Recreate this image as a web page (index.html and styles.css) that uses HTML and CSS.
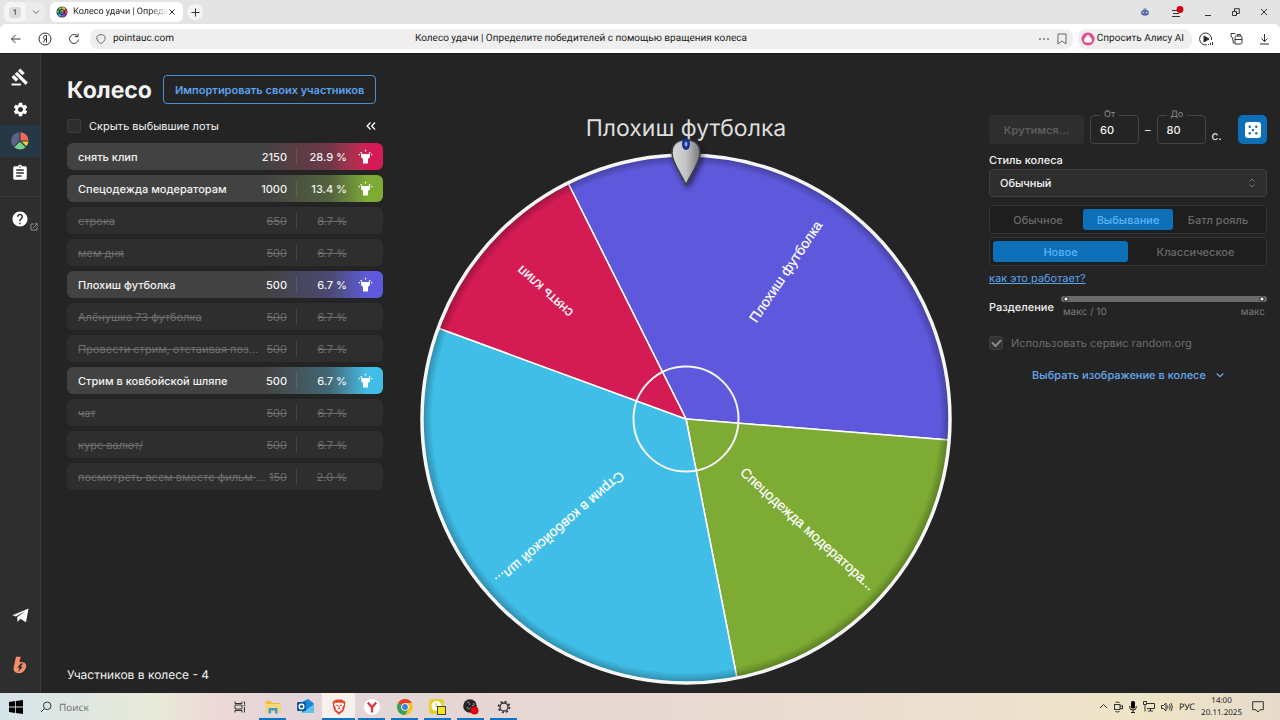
FILE: index.html
```html
<!DOCTYPE html>
<html lang="ru">
<head>
    <meta charset="UTF-8">
    <title>Колесо удачи | Определите победителей с помощью вращения колеса</title>
    <link rel="stylesheet" href="styles.css">
</head>
<body>
    <header class="browser">
        <div class="tabs">
            <div class="tab-group">
                <button class="tab-count" aria-label="Вкладки"><span>1</span></button>
                <button class="tab-list" aria-label="Список вкладок">
                    <svg width="8" height="8" viewBox="0 0 8 8" class="line soft"><path d="M1 2.500l3 3 3-3"/></svg>
                </button>
            </div>
            <div class="tab">
                <svg width="12" height="12" viewBox="0 0 12 12">
                    <circle cx="6" cy="6" r="5.500" fill="#222"/>
                    <path d="M6 6L6 1A5 5 0 0 1 10 3z" fill="#e8b93a"/>
                    <path d="M6 6L10.500 3.500A5 5 0 0 1 10.500 8.500z" fill="#d83b6b"/>
                    <path d="M6 6L10 9A5 5 0 0 1 6 11z" fill="#8a4fd0"/>
                    <path d="M6 6L5.500 11A5 5 0 0 1 1.500 8.500z" fill="#3aa6d8"/>
                    <path d="M6 6L1.200 7.500A5 5 0 0 1 1.700 3.500z" fill="#35b58a"/>
                    <path d="M6 6L2.200 2.800A5 5 0 0 1 5.500 1z" fill="#7fc043"/>
                    <circle cx="6" cy="6" r="2.600" fill="none" stroke="#222" stroke-width="0.800"/>
                </svg>
                <span class="tab-title">Колесо удачи | Опреде</span>
                <button class="icon-btn" aria-label="Закрыть вкладку">
                    <svg width="8" height="8" viewBox="0 0 8 8" class="line"><path d="M1.500 1.500l5 5M6.500 1.500l-5 5"/></svg>
                </button>
            </div>
            <button class="new-tab" aria-label="Новая вкладка">
                <svg width="9" height="9" viewBox="0 0 9 9" class="line"><path d="M4.500 0.500v8M0.500 4.500h8"/></svg>
            </button>
            <div class="window-buttons">
                <button class="icon-btn" aria-label="Профиль">
                    <svg width="10" height="10" viewBox="0 0 10 10"><path d="M3.500 1h3v2h-3z" fill="#9aa3c4"/><ellipse cx="5" cy="5.800" rx="4" ry="3" fill="#5b6cab"/><path d="M2.500 5.500h1.500M6 5.500h1.500" stroke="#dde"/></svg>
                </button>
                <button class="icon-btn" aria-label="Меню">
                    <svg width="14" height="12" viewBox="0 0 14 12"><path d="M2 4.500h6M3 7.500h6M2 10.500h8" stroke="#333"/><circle cx="10" cy="3.500" r="3.400" fill="#d4000f"/></svg>
                </button>
                <button class="icon-btn" aria-label="Свернуть">
                    <svg width="8" height="8" viewBox="0 0 8 8" class="line"><path d="M1 7.500h6"/></svg>
                </button>
                <button class="icon-btn" aria-label="Развернуть">
                    <svg width="8" height="8" viewBox="0 0 8 8" class="line"><path d="M0.500 3.500h4v4h-4zM2.500 3V0.700h4.800v4.800H5"/></svg>
                </button>
                <button class="icon-btn" aria-label="Закрыть">
                    <svg width="8" height="8" viewBox="0 0 8 8" class="line"><path d="M1 1l6 6M7 1l-6 6"/></svg>
                </button>
            </div>
        </div>
        <div class="toolbar">
            <div class="nav-buttons">
                <button class="icon-btn" aria-label="Назад">
                    <svg width="12" height="12" viewBox="0 0 12 12" class="line"><path d="M10.500 6h-9M5.500 2l-4 4 4 4"/></svg>
                </button>
                <button class="icon-btn" aria-label="Яндекс">
                    <svg width="14" height="14" viewBox="0 0 14 14" class="line"><circle cx="7" cy="7" r="6"/><path d="M8.500 10.500v-7H7.300c-2.500 0-2.500 3.700 0 3.700h1.200M7.200 7.200l-1.900 3.300"/></svg>
                </button>
                <button class="icon-btn" aria-label="Обновить">
                    <svg width="12" height="12" viewBox="0 0 12 12" class="line"><path d="M9.800 3.500A4.500 4.500 0 1 0 10.500 6.500M10 0.500v3.200H6.800"/></svg>
                </button>
            </div>
            <div class="address">
                <svg width="10" height="10" viewBox="0 0 10 10" class="line soft"><path d="M5 0.700C6.500 0.700 9.200 1.500 9.200 3.500c0 3-2 5-4.200 6-2.200-1-4.200-3-4.200-6C0.800 1.500 3.500 0.700 5 0.700z"/></svg>
                <span class="domain">pointauc.com</span>
                <span class="page-title">Колесо удачи | Определите победителей с помощью вращения колеса</span>
                <button class="icon-btn" aria-label="Ещё">
                    <svg width="12" height="4" viewBox="0 0 12 4" fill="#777"><circle cx="2" cy="2" r="1"/><circle cx="6" cy="2" r="1"/><circle cx="10" cy="2" r="1"/></svg>
                </button>
                <button class="icon-btn" aria-label="В закладки">
                    <svg width="10" height="12" viewBox="0 0 10 12" class="line soft"><path d="M1 1h8v10L5 8l-4 3z"/></svg>
                </button>
            </div>
            <button class="alice">
                <svg width="14" height="14" viewBox="0 0 14 14"><circle cx="7" cy="7" r="6.500" fill="#e8478b"/><path d="M7 2.800c1.200 0 4.200 4.800 4.200 6 0 1.300-2 2-4.200 2s-4.200-.7-4.200-2c0-1.200 3-6 4.200-6z" fill="#fff"/></svg>
                <span>Спросить Алису AI</span>
            </button>
            <div class="tools">
                <button class="icon-btn" aria-label="Плеер">
                    <svg width="15" height="14" viewBox="0 0 15 14" class="line"><path d="M8 12.800A6 6 0 1 1 12.500 8"/><path d="M5 4l5 3-5 3z" fill="#222"/><path d="M9.500 13v-1M11.500 13v-2M13.500 13v-3"/></svg>
                </button>
                <button class="icon-btn" aria-label="Коллекции">
                    <svg width="13" height="13" viewBox="0 0 13 13" class="line"><path d="M3.500 11.500L2.500 6 1 4V1.500h4l1 1M5 12h5.500q1.500 0 1.500-1.500V5.500Q12 4 10.500 4H6.500Q5 4 5 5.500zM5 7.500h7M7.500 4V2.500h3V4"/></svg>
                </button>
                <button class="icon-btn" aria-label="Загрузки">
                    <svg width="11" height="12" viewBox="0 0 11 12" class="line"><path d="M5.500 1v7.500M2.500 5.500l3 3 3-3M1 11h9"/></svg>
                </button>
            </div>
        </div>
    </header>

    <div class="app">
        <nav class="sidebar">
            <a href="#" class="nav-item" aria-label="Аукцион">
                <svg width="18" height="18" viewBox="0 0 24 24"><path d="M1 21h12v2H1zM5.245 8.070l2.830-2.827 14.140 14.142-2.828 2.828zM12.317 1l5.657 5.656-2.830 2.830-5.654-5.660zM3.825 9.485l5.657 5.657-2.828 2.828-5.657-5.657z" stroke="#fff" stroke-width="0.500"/></svg>
            </a>
            <a href="#" class="nav-item" aria-label="Настройки">
                <svg width="17" height="17" viewBox="0 0 24 24"><path d="M19.140 12.940c.04-.3.060-.61.060-.94 0-.32-.02-.64-.07-.94l2.030-1.580c.18-.14.23-.41.12-.61l-1.920-3.320c-.12-.22-.37-.29-.59-.22l-2.390.96c-.5-.38-1.030-.7-1.620-.94l-.36-2.540c-.04-.24-.24-.41-.48-.41h-3.840c-.24 0-.43.17-.47.41l-.36 2.540c-.59.24-1.130.57-1.620.94l-2.390-.96c-.22-.08-.47 0-.59.22L2.740 8.870c-.12.21-.08.47.12.61l2.030 1.580c-.05.3-.09.63-.09.94s.02.64.07.94l-2.030 1.580c-.18.14-.23.41-.12.61l1.920 3.320c.12.22.37.29.59.22l2.390-.96c.5.38 1.030.7 1.620.94l.36 2.540c.05.24.24.41.48.41h3.840c.24 0 .44-.17.47-.41l.36-2.540c.59-.24 1.130-.56 1.620-.94l2.390.96c.22.08.47 0 .59-.22l1.920-3.320c.12-.22.07-.47-.12-.61zM12 15.600c-1.980 0-3.600-1.620-3.600-3.600s1.620-3.600 3.600-3.600 3.600 1.620 3.600 3.600-1.620 3.600-3.600 3.600"/></svg>
            </a>
            <a href="#" class="nav-item active" aria-label="Колесо">
                <svg width="18" height="18" viewBox="0 0 18 18">
                    <path d="M9.500 8.500V0.300A8.500 8.500 0 0 1 17.600 8.500z" fill="#f2695c"/>
                    <path d="M10.500 9.500h7.100A8.500 8.500 0 0 1 15.300 14.300z" fill="#f0c93c"/>
                    <path d="M9 9.800L14.600 15.200A8.500 8.500 0 0 1 3.200 15.300z" fill="#74d48a"/>
                    <path d="M8.400 0.300V9L2.500 14.600A8.500 8.500 0 0 1 8.400 0.300z" fill="#5c6287"/>
                </svg>
            </a>
            <a href="#" class="nav-item" aria-label="История">
                <svg width="18" height="18" viewBox="0 0 24 24"><path d="M19 3h-4.180C14.400 1.840 13.300 1 12 1s-2.400.84-2.820 2H5c-1.100 0-2 .9-2 2v14c0 1.100.9 2 2 2h14c1.100 0 2-.9 2-2V5c0-1.100-.9-2-2-2m-7 0c.55 0 1 .45 1 1s-.45 1-1 1-1-.45-1-1 .45-1 1-1m2 14H7v-2h7zm3-4H7v-2h10zm0-4H7V7h10z"/></svg>
            </a>
            <hr>
            <a href="#" class="nav-item" aria-label="Помощь">
                <svg width="18" height="18" viewBox="0 0 24 24"><path d="M12 2C6.480 2 2 6.480 2 12s4.480 10 10 10 10-4.480 10-10S17.520 2 12 2m1 17h-2v-2h2zm2.070-7.750-.9.920C13.450 12.900 13 13.500 13 15h-2v-.5c0-1.100.45-2.100 1.170-2.830l1.240-1.260c.37-.36.59-.86.59-1.410 0-1.100-.9-2-2-2s-2 .9-2 2H8c0-2.210 1.790-4 4-4s4 1.790 4 4c0 .88-.36 1.680-.93 2.250"/></svg>
                <svg class="external" width="8" height="8" viewBox="0 0 8 8"><path d="M4 1H1v6h6V4M5 0.700h2.300V3M7 1L3 5" fill="none" stroke="#8a8a8a"/></svg>
            </a>
            <div class="nav-bottom">
                <a href="#" class="nav-item" aria-label="Telegram">
                    <svg width="17" height="15" viewBox="0 0 17 15"><path d="M0.500 7.300L16.500 0.500 14 14.200 8.300 10.800 5.600 14 5.200 9.300 13.500 3 3.900 8.500z"/></svg>
                </a>
                <a href="#" class="nav-item" aria-label="Boosty">
                    <svg width="14" height="18" viewBox="0 0 14 18"><path d="M3 0.800h4.800L6.300 6h2.200c4 0 5.500 3 4.300 6-1.200 3.500-4 5.200-7 5.200C2 17.200 0 15 0.700 11z" fill="#f28c6c"/><path d="M7.600 7.500L4.500 11.800h2L5.200 16l4.500-5.200H7.500L10 7.500z" fill="#2e2e2e"/></svg>
                </a>
            </div>
        </nav>

        <main>
            <section class="lots">
                <div class="lots-head">
                    <h1>Колесо</h1>
                    <button class="import">Импортировать своих участников</button>
                </div>
                <div class="lots-filter">
                    <label class="check"><input type="checkbox"> <span>Скрыть выбывшие лоты</span></label>
                    <button class="icon-btn" aria-label="Свернуть список">
                        <svg width="10" height="10" viewBox="0 0 10 10" class="line white"><path d="M4.500 1.500L1.200 5l3.300 3.500M9 1.500L5.700 5 9 8.500"/></svg>
                    </button>
                </div>
                <ul class="lot-list">
                    <li class="lot red"><span class="name">снять клип</span><span class="cost">2150</span><span class="chance">28.9 %</span><svg class="lamp" viewBox="0 0 24 24"><use href="#lamp"/></svg></li>
                    <li class="lot green"><span class="name">Спецодежда модераторам</span><span class="cost">1000</span><span class="chance">13.4 %</span><svg class="lamp" viewBox="0 0 24 24"><use href="#lamp"/></svg></li>
                    <li class="lot out"><span class="name">строка</span><span class="cost">650</span><span class="chance">8.7 %</span></li>
                    <li class="lot out"><span class="name">мем дня</span><span class="cost">500</span><span class="chance">6.7 %</span></li>
                    <li class="lot violet"><span class="name">Плохиш футболка</span><span class="cost">500</span><span class="chance">6.7 %</span><svg class="lamp" viewBox="0 0 24 24"><use href="#lamp"/></svg></li>
                    <li class="lot out"><span class="name">Алёнушка 73 футболка</span><span class="cost">500</span><span class="chance">6.7 %</span></li>
                    <li class="lot out"><span class="name">Провести стрим, отстаивая поз<i>...</i></span><span class="cost">500</span><span class="chance">6.7 %</span></li>
                    <li class="lot cyan"><span class="name">Стрим в ковбойской шляпе</span><span class="cost">500</span><span class="chance">6.7 %</span><svg class="lamp" viewBox="0 0 24 24"><use href="#lamp"/></svg></li>
                    <li class="lot out"><span class="name">чат</span><span class="cost">500</span><span class="chance">6.7 %</span></li>
                    <li class="lot out"><span class="name">курс валют/</span><span class="cost">500</span><span class="chance">6.7 %</span></li>
                    <li class="lot out"><span class="name">посмотреть всем вместе фильм <i>...</i></span><span class="cost">150</span><span class="chance">2.0 %</span></li>
                </ul>
                <p class="total">Участников в колесе - 4</p>
            </section>

            <section class="wheel">
                <h2>Плохиш футболка</h2>
                <svg class="wheel-svg" viewBox="-266 -266 532 532">
                    <defs>
                        <g id="lamp"><path d="M5 13l3 3v7h8v-7l3-3V8H5zM11 1h2v3h-2zM3.500 5.875L4.914 4.460l2.120 2.122L5.620 7.997zM1 8h2v2H1zM21 8h2v2h-2zM16.960 6.585l2.123-2.120 1.414 1.414L18.375 8z"/></g>
                        <radialGradient id="edge" gradientUnits="userSpaceOnUse" cx="0" cy="0" r="264">
                            <stop offset="0.960" stop-color="#000" stop-opacity="0"/>
                            <stop offset="1" stop-color="#000" stop-opacity="0.300"/>
                        </radialGradient>
                        <linearGradient id="metal" x1="0" y1="0" x2="1" y2="0">
                            <stop offset="0" stop-color="#d8d8d8"/>
                            <stop offset="0.500" stop-color="#c4c4c4"/>
                            <stop offset="1" stop-color="#777"/>
                        </linearGradient>
                        <filter id="shadow" x="-50%" y="-50%" width="200%" height="200%"><feDropShadow dx="2" dy="3" stdDeviation="3" flood-opacity="0.600"/></filter>
                    </defs>
                    <g stroke="#fff" stroke-width="1.500">
                        <path d="M0 0L-118 -236A264 264 0 0 1 263 21z" fill="#5e59dc"/>
                        <path d="M0 0L263 21A264 264 0 0 1 51 259z" fill="#7dab33"/>
                        <path d="M0 0L51 259A264 264 0 0 1 -248 -91z" fill="#40bee8"/>
                        <path d="M0 0L-248 -91A264 264 0 0 1 -118 -236z" fill="#d41b53"/>
                    </g>
                    <circle r="264" fill="url(#edge)"/>
                    <circle r="264" class="ring" stroke-width="3.500"/>
                    <circle r="52.500" class="ring" stroke-width="2"/>
                    <g class="sector-text">
                        <text x="178" y="5" transform="rotate(-56)">Плохиш футболка</text>
                        <text x="164" y="5" transform="rotate(42)">Спецодежда модератора...</text>
                        <text x="167" y="5" transform="rotate(139)">Стрим в ковбойской шл...</text>
                        <text x="190" y="5" transform="rotate(222)">снять клип</text>
                    </g>
                    <g filter="url(#shadow)">
                        <path d="M0 -234C-4 -244 -14 -256 -14 -266C-14 -275 -8 -279 0 -279S14 -275 14 -266C14 -256 4 -244 0 -234z" fill="url(#metal)" stroke="#3a3f45" stroke-width="1.500"/>
                    </g>
                    <ellipse cx="0" cy="-275" rx="4" ry="6" fill="#16308f"/>
                    <ellipse cx="0" cy="-275" rx="1.500" ry="2.500" fill="#8ba4e0"/>
                </svg>
            </section>

            <section class="settings">
                <div class="spin-row">
                    <button class="spin" disabled>Крутимся...</button>
                    <fieldset><legend><label for="from">От</label></legend><input id="from" type="text" value="60"></fieldset>
                    <span>–</span>
                    <fieldset><legend><label for="to">До</label></legend><input id="to" type="text" value="80"></fieldset>
                    <span class="unit">с.</span>
                    <button class="dice" aria-label="Случайное время">
                        <svg width="16" height="16" viewBox="0 0 16 16"><rect width="16" height="16" rx="3" fill="#fff"/><g fill="#0c6cb4"><circle cx="4.700" cy="4.700" r="1.200"/><circle cx="11.300" cy="4.700" r="1.200"/><circle cx="8" cy="8" r="1.200"/><circle cx="4.700" cy="11.300" r="1.200"/><circle cx="11.300" cy="11.300" r="1.200"/></g></svg>
                    </button>
                </div>
                <label class="field-label" for="style">Стиль колеса</label>
                <div class="select">
                    <select id="style"><option>Обычный</option></select>
                    <svg width="8" height="10" viewBox="0 0 8 10"><path d="M1.500 3.500L4 1l2.500 2.500M1.500 6.500L4 9l2.500-2.500" fill="none" stroke="#777"/></svg>
                </div>
                <div class="segments">
                    <button>Обычное</button>
                    <button class="on">Выбывание</button>
                    <button>Батл рояль</button>
                </div>
                <div class="segments">
                    <button class="on">Новое</button>
                    <button>Классическое</button>
                </div>
                <a href="#" class="how">как это работает?</a>
                <div class="split">
                    <label for="split">Разделение</label>
                    <div class="slider">
                        <input id="split" type="range" min="0" max="10" value="10" disabled>
                        <div class="marks"><span>макс / 10</span><span>макс</span></div>
                    </div>
                </div>
                <label class="check disabled"><input type="checkbox" checked disabled> <span>Использовать сервис random.org</span></label>
                <button class="choose">Выбрать изображение в колесе
                    <svg width="8" height="8" viewBox="0 0 8 8"><path d="M0.700 2.500L4 5.700l3.300-3.200" fill="none" stroke="#66a9ee" stroke-width="1.300"/></svg>
                </button>
            </section>
        </main>
    </div>

    <footer class="taskbar">
        <button class="start" aria-label="Пуск">
            <svg width="14" height="14" viewBox="0 0 14 14"><path d="M0 2l6-.9v5.500H0zM6.800 1L14 0v6.600H6.800zM0 7.400h6v5.500L0 12zM6.800 7.400H14V14l-7.200-1z" fill="#000"/></svg>
        </button>
        <label class="search">
            <svg width="12" height="12" viewBox="0 0 12 12" class="line"><circle cx="7.200" cy="4.800" r="3.800"/><path d="M4.500 7.500L1 11"/></svg>
            <input type="text" placeholder="Поиск" aria-label="Поиск">
        </label>
        <div class="apps">
            <button aria-label="Представление задач">
                <svg width="12" height="12" viewBox="0 0 12 12" class="line"><path d="M1 0.500v2h7v-2M1 4h7v4H1zM1 11.500v-2h7v2M10.500 0.500v3M10.500 6v5.500M9.800 4.500h1.500"/></svg>
            </button>
            <button class="running" aria-label="Проводник">
                <svg width="16" height="14" viewBox="0 0 16 14"><path d="M0.500 1h5l1.500 2h8.500v9H0.500z" fill="#f0bd3d"/><path d="M0.500 4h15v8.500H0.500z" fill="#f8d876"/><path d="M3.500 13.500V8h9v5.500H10V10.500H6v3z" fill="#3f9bd8"/></svg>
            </button>
            <button aria-label="Outlook">
                <svg width="17" height="15" viewBox="0 0 17 15"><path d="M5 3L11 0l5.500 4v9.500H5z" fill="#1a86d6"/><path d="M5 14l11.500-8.500V14z" fill="#5dc2f2"/><rect y="3" width="9" height="9" rx="1" fill="#0c59a4"/><circle cx="4.500" cy="7.500" r="2.300" fill="none" stroke="#fff" stroke-width="1.400"/></svg>
            </button>
            <button class="running current" aria-label="Brave">
                <svg width="14" height="16" viewBox="0 0 14 16"><path d="M4 0.500h6l1.500 1.200h1l1 2.300-.5 1.200.2 1-1.500 5.500L7 15.700 2.300 11.700 0.800 6.200 1 5.200.5 4l1-2.300h1z" fill="#e8452c"/><path d="M3 3.500l2.500.5L7 3.500 8.500 4l2.500-.5L12 5.500l-2 3.500.5 1.500L7 13 3.500 10.500 4 9 2 5.500z" fill="#fff"/><path d="M4 6l2 .7M10 6l-2 .7M7 6.500v3M5.500 10L7 9.300l1.500.7" stroke="#e8452c" fill="none"/></svg>
            </button>
            <button class="running" aria-label="Яндекс Браузер">
                <svg width="16" height="16" viewBox="0 0 16 16"><circle cx="8" cy="8" r="8" fill="#fff"/><path d="M3.800 3.500L8 8.500v5M12.200 3.500L8 8.500" fill="none" stroke="#e8323c" stroke-width="2.200"/></svg>
            </button>
            <button class="running" aria-label="Chrome">
                <svg width="16" height="16" viewBox="0 0 16 16"><circle cx="8" cy="8" r="8" fill="#f6c526"/><path d="M8 8L1.100 4A8 8 0 0 0 8 16l3.500-6z" fill="#34a353"/><path d="M1.100 4A8 8 0 0 1 14.900 4H8v4z" fill="#e2402f"/><circle cx="8" cy="8" r="3.800" fill="#fff"/><circle cx="8" cy="8" r="2.900" fill="#3f7fe8"/></svg>
            </button>
            <button class="running" aria-label="Заметки">
                <svg width="17" height="16" viewBox="0 0 17 16"><rect width="15" height="15" rx="3" fill="#e3d22f"/><circle cx="7.500" cy="7" r="5" fill="#fff"/><path d="M7 4v3.500h2" fill="none" stroke="#d0bb20"/><rect x="8.500" y="7.500" width="8" height="8" fill="#f5e51c" stroke="#444"/></svg>
            </button>
            <button class="running" aria-label="OBS">
                <svg width="16" height="16" viewBox="0 0 16 16"><circle cx="7" cy="7" r="6.800" fill="#252525"/><path d="M4 4c2-2 3 0 2.500 2M10.500 4c1.500 2 0 3-1.500 2.500M4 8c1 3 3 2 3.500 0.500" fill="none" stroke="#999"/><circle cx="11.500" cy="11.500" r="4" fill="#e3000f"/></svg>
            </button>
            <button class="running" aria-label="Параметры">
                <svg width="14" height="14" viewBox="0 0 14 14" fill="none" stroke="#333"><circle cx="7" cy="7" r="4" stroke-width="1.300"/><circle cx="7" cy="7" r="5.400" stroke-width="1.800" stroke-dasharray="2 2.240"/></svg>
            </button>
        </div>
        <div class="tray">
            <svg width="9" height="9" viewBox="0 0 9 9" class="line"><path d="M1 6l3.500-3.500L8 6"/></svg>
            <svg width="9" height="12" viewBox="0 0 9 12" class="line"><rect x="0.500" y="3.500" width="5.500" height="5"/><path d="M6 5.500l2.500-1v3.500L6 7M1.500 1.500q2-1 4 0M1.500 10.500q2 1 4 0"/></svg>
            <svg width="8" height="12" viewBox="0 0 8 12"><rect x="2" width="4" height="7.500" rx="1.500"/><path d="M0.800 5v1.500q0 2.500 3.200 2.500t3.200-2.500V5M4 9v2.500M2 11.500h4" fill="none" stroke="#222"/></svg>
            <svg width="12" height="11" viewBox="0 0 12 11" class="line"><path d="M4 2.500h7.500v5H4M0.500 0.500h3v3h-3zM2 3.500v7M5 10h5M7.500 7.500V10"/></svg>
            <svg width="12" height="10" viewBox="0 0 12 10" class="line"><path d="M0.500 3.500h2L5 1.200v7.600L2.500 6.500h-2zM6.500 3.500q1 1.500 0 3M8.300 2.200q2 2.800 0 5.600M10 1q2.700 4 0 8"/></svg>
            <span>РУС</span>
            <time><span>14:00</span><span>20.11.2025</span></time>
            <svg width="12" height="12" viewBox="0 0 12 12" class="line"><path d="M0.700 0.700h10.600v8H8L6 11 4 8.700H0.700z"/></svg>
        </div>
    </footer>
</body>
</html>
```
FILE: styles.css
```css
* {
    box-sizing: border-box;
}
body {
    margin: 0;
    height: 100vh;
    display: flex;
    flex-direction: column;
    overflow: hidden;
    background: #242424;
    color: #f2f2f2;
    font-family: Inter, "Liberation Sans", sans-serif;
    font-size: 11px;
    text-rendering: geometricPrecision;
}
button, input, select {
    font: inherit;
    color: inherit;
    text-rendering: inherit;
    border: none;
    background: none;
    padding: 0;
    margin: 0;
}
svg {
    display: block;
    flex-shrink: 0;
}
.line {
    fill: none;
    stroke: #333;
}
.line.soft {
    stroke: #666;
}
.line.white {
    stroke: #fff;
    stroke-width: 1.3;
}
.icon-btn {
    display: flex;
    align-items: center;
    justify-content: center;
}

/* browser */
.browser {
    background: #e4e4e4;
    color: #222;
    font-family: Roboto, sans-serif;
    font-size: 10px;
}
.tabs {
    display: flex;
    align-items: center;
    height: 24px;
    padding: 0 12px 0 4px;
}
.tab-group {
    display: flex;
    height: 20px;
    margin-right: 5px;
    border-radius: 6px;
    background: #ebebeb;
}
.tab-count {
    width: 22px;
    border-radius: 6px;
    background: #f4f4f4;
    font-size: 8px;
}
.tab-count span {
    padding: 1px 4px;
    border-radius: 3px;
    background: #dcdcdc;
}
.tab-list {
    width: 19px;
    display: flex;
    align-items: center;
    justify-content: center;
}
.tab {
    display: flex;
    align-items: center;
    width: 133px;
    height: 20px;
    padding: 0 7px 0 6px;
    border-radius: 6px;
    background: #fff;
}
.tab-title {
    flex: 1;
    margin-left: 5px;
    overflow: hidden;
    white-space: nowrap;
    font-size: 9px;
    mask-image: linear-gradient(to right, #000 80%, transparent);
}
.new-tab {
    display: flex;
    align-items: center;
    justify-content: center;
    width: 16px;
    height: 16px;
    margin-left: 4px;
    border-radius: 8px;
    background: #f4f4f4;
}
.window-buttons {
    display: flex;
    margin-left: auto;
    gap: 20px;
}
.toolbar {
    display: flex;
    align-items: center;
    height: 29px;
    padding: 0 10px;
    background: #fff;
    border-radius: 6px 6px 0 0;
}
.nav-buttons {
    display: flex;
    gap: 16px;
    margin-right: 10px;
}
.address {
    flex: 1;
    display: flex;
    align-items: center;
    gap: 7px;
    height: 20px;
    padding: 0 6px;
    border-radius: 8px;
    background: #efefef;
}
.page-title {
    flex: 1;
    padding-right: 50px;
    text-align: center;
}
.alice {
    display: flex;
    align-items: center;
    gap: 2px;
    height: 20px;
    margin: 0 7px 0 5px;
    padding: 0 8px 0 3px;
    border-radius: 8px;
    background: #efefef;
}
.tools {
    display: flex;
    gap: 16px;
}

/* app */
.app {
    flex: 1;
    min-height: 0;
    display: flex;
    border-top: 1px solid #1a1a1a;
}
.sidebar {
    width: 41px;
    display: flex;
    flex-direction: column;
    padding: 7px 0 12px;
    background: #2e2e2e;
    border-right: 1px solid #3c3c3c;
}
.nav-item {
    position: relative;
    display: flex;
    align-items: center;
    justify-content: center;
    height: 32px;
    fill: #fff;
}
.nav-item.active {
    background: #263845;
}
.external {
    position: absolute;
    right: 2px;
    bottom: 4px;
}
.sidebar hr {
    width: 100%;
    margin: 7px 0 6px;
    border: none;
    border-top: 1px solid #3c3c3c;
}
.nav-bottom {
    margin-top: auto;
    display: flex;
    flex-direction: column;
    gap: 18px;
}
main {
    flex: 1;
    display: grid;
    grid-template-columns: 316px 1fr 278px;
    padding: 0 13px 0 26px;
}

/* lots */
.lots {
    display: flex;
    flex-direction: column;
    padding: 21px 0 10px;
}
.lots-head {
    display: flex;
    align-items: center;
    gap: 11px;
}
h1 {
    margin: 0;
    font-size: 23px;
    line-height: 28px;
}
.import {
    height: 29px;
    padding: 0 11px;
    border: 1px solid #4a90d0;
    border-radius: 4px;
    color: #5aa2ee;
    font-weight: 600;
    white-space: nowrap;
}
.lots-filter {
    display: flex;
    align-items: center;
    justify-content: space-between;
    height: 24px;
    margin: 10px 7px 5px 0;
}
.check {
    display: flex;
    align-items: center;
    gap: 8px;
}
.check input {
    appearance: none;
    width: 14px;
    height: 14px;
    border: 1px solid #3e3e3e;
    border-radius: 3px;
    background: #2e2e2e;
}
.check input:checked {
    background: #333;
    display: grid;
    place-items: center;
}
.check input:checked::before {
    content: "";
    width: 7px;
    height: 4px;
    margin-bottom: 2px;
    border: solid #8c8c8c;
    border-width: 0 0 2px 2px;
    transform: rotate(-45deg);
}
.check.disabled {
    color: #6c6c6c;
}
.lot-list {
    display: flex;
    flex-direction: column;
    gap: 5px;
    margin: 0;
    padding: 0;
    list-style: none;
}
.lot {
    --color: #424242;
    display: grid;
    grid-template-columns: 1fr auto 61px 20px;
    align-items: center;
    height: 27px;
    padding: 0 6px 0 11px;
    border-radius: 6px;
    background: linear-gradient(to right, #424242 62%, color-mix(in srgb, var(--color) 30%, #424242) 83%, var(--color) 95%);
    font-weight: 500;
}
.name {
    overflow: hidden;
    white-space: nowrap;
}
.name i {
    display: inline-block;
    font-style: normal;
}
.cost {
    padding: 0 9px 0 4px;
}
.chance {
    border-left: 1px solid rgba(255, 255, 255, 0.1);
    padding-right: 10px;
    line-height: 16px;
    text-align: right;
}
.lamp {
    width: 15px;
    height: 15px;
    margin-left: 1px;
    fill: #fff;
}
.red {
    --color: #d41b53;
}
.green {
    --color: #7dab33;
}
.violet {
    --color: #5e59dc;
}
.cyan {
    --color: #40bee8;
}
.lot.out {
    background: #2e2e2e;
    color: #6e6e6e;
    font-weight: 400;
}
.out span {
    text-decoration: line-through;
}
.total {
    margin: auto 0 0;
    font-size: 12px;
    line-height: 16px;
}

/* wheel */
.wheel {
    min-height: 0;
    display: flex;
    flex-direction: column;
    align-items: center;
    padding: 56px 0 8px;
}
h2 {
    margin: 0;
    padding-bottom: 7px;
    font-size: 23px;
    font-weight: 400;
    line-height: 36px;
    color: #dedede;
}
.wheel-svg {
    flex: 1;
    min-height: 0;
    width: 100%;
    overflow: visible;
}
.ring {
    fill: none;
    stroke: #f6f6f6;
}
.sector-text {
    fill: #fff;
    stroke: #fff;
    stroke-width: 0.2;
    font-family: "Liberation Sans", sans-serif;
    font-size: 14px;
    text-anchor: middle;
}

/* settings */
.settings {
    display: flex;
    flex-direction: column;
    padding-top: 54px;
}
.spin-row {
    display: flex;
    align-items: flex-end;
    gap: 6px;
    height: 36px;
}
.spin-row > span {
    line-height: 28px;
}
.spin-row > .unit {
    font-size: 12px;
    line-height: 16px;
}
.spin {
    width: 95px;
    height: 29px;
    border-radius: 4px;
    background: #2e2e2e;
    color: #5c5c5c;
    font-weight: 600;
}
fieldset {
    width: 49px;
    height: 34px;
    margin: 0;
    padding: 0 0 0 9px;
    border: 1px solid #444;
    border-radius: 4px;
}
legend {
    margin: 0;
    padding: 0 4px;
    color: #8c8c8c;
    font-size: 9px;
    line-height: 10px;
}
fieldset input {
    width: 100%;
    height: 20px;
    font-weight: 500;
}
.dice {
    display: flex;
    align-items: center;
    justify-content: center;
    width: 29px;
    height: 29px;
    margin-left: auto;
    border-radius: 5px;
    background: #0c6fb8;
}
.field-label {
    margin-top: 8px;
    line-height: 17px;
    font-weight: 500;
}
.select {
    display: flex;
    align-items: center;
    height: 28px;
    margin-bottom: 8px;
    padding: 0 10px;
    border: 1px solid #3e3e3e;
    border-radius: 4px;
    background: #2e2e2e;
    font-weight: 500;
}
.select select {
    flex: 1;
    appearance: none;
}
.segments {
    display: flex;
    height: 29px;
    margin-bottom: 3px;
    padding: 3px;
    border: 1px solid #363636;
    border-radius: 4px;
    background: #1e1e1e;
}
.segments button {
    flex: 1;
    border-radius: 3px;
    color: #6a6a6a;
    font-weight: 500;
}
.segments .on {
    background: #0c6fb8;
    color: #5eb4f4;
}
.how {
    align-self: flex-start;
    color: #5aa2ee;
    line-height: 18px;
}
.split {
    display: flex;
    align-items: center;
    gap: 7px;
    margin-top: 9px;
    font-weight: 500;
}
.slider {
    flex: 1;
}
.slider input {
    display: block;
    appearance: none;
    width: 100%;
    height: 6px;
    border-radius: 3px;
    background:
        radial-gradient(circle at 5px 3px, #fff 1px, #242424 2px, transparent 3px),
        radial-gradient(circle at calc(100% - 5px) 3px, #fff 1px, #242424 2px, transparent 3px),
        #6b6b6b;
}
.slider input::-webkit-slider-thumb {
    appearance: none;
    width: 6px;
    height: 6px;
}
.marks {
    display: flex;
    justify-content: space-between;
    padding: 4px 2px 0;
    color: #7a7a7a;
    font-size: 10px;
    font-weight: 400;
    line-height: 12px;
}
.settings > .check {
    margin-top: 18px;
}
.choose {
    display: flex;
    align-items: center;
    align-self: center;
    gap: 10px;
    margin-top: 17px;
    color: #66a9ee;
    font-weight: 500;
    line-height: 16px;
}

/* taskbar */
.taskbar {
    display: flex;
    height: 27px;
    background: linear-gradient(to right, #d5e4ea, #e9ead9 12%, #ecd9d6 17%, #e3d5d8 22%, #e8d8d2 50%, #ece0d0 75%, #efe5c6 90%, #e6dacb);
    color: #222;
    font-family: "Noto Sans", sans-serif;
    font-size: 9px;
}
.start {
    display: flex;
    align-items: center;
    justify-content: center;
    width: 32px;
}
.search {
    display: flex;
    align-items: center;
    gap: 7px;
    width: 191px;
    padding-left: 8px;
    font-size: 10px;
}
.search input {
    flex: 1;
    min-width: 0;
}
.search input::placeholder {
    color: #777;
}
.apps {
    display: flex;
}
.apps button {
    display: flex;
    align-items: center;
    justify-content: center;
    width: 33px;
    border: solid transparent;
    border-width: 0 3px;
}
.apps .running {
    background: linear-gradient(#0f74c4, #0f74c4) bottom / 100% 2px no-repeat padding-box;
}
.apps .current {
    border-width: 0;
    background: linear-gradient(#0f74c4, #0f74c4) bottom / 100% 2px no-repeat #f7f1ee;
}
.tray {
    display: flex;
    align-items: center;
    gap: 6px;
    margin-left: auto;
    padding-right: 16px;
}
.tray time {
    display: flex;
    flex-direction: column;
    align-items: center;
    margin: 0 4px 0 0;
    font-size: 8px;
    line-height: 12px;
}
```
